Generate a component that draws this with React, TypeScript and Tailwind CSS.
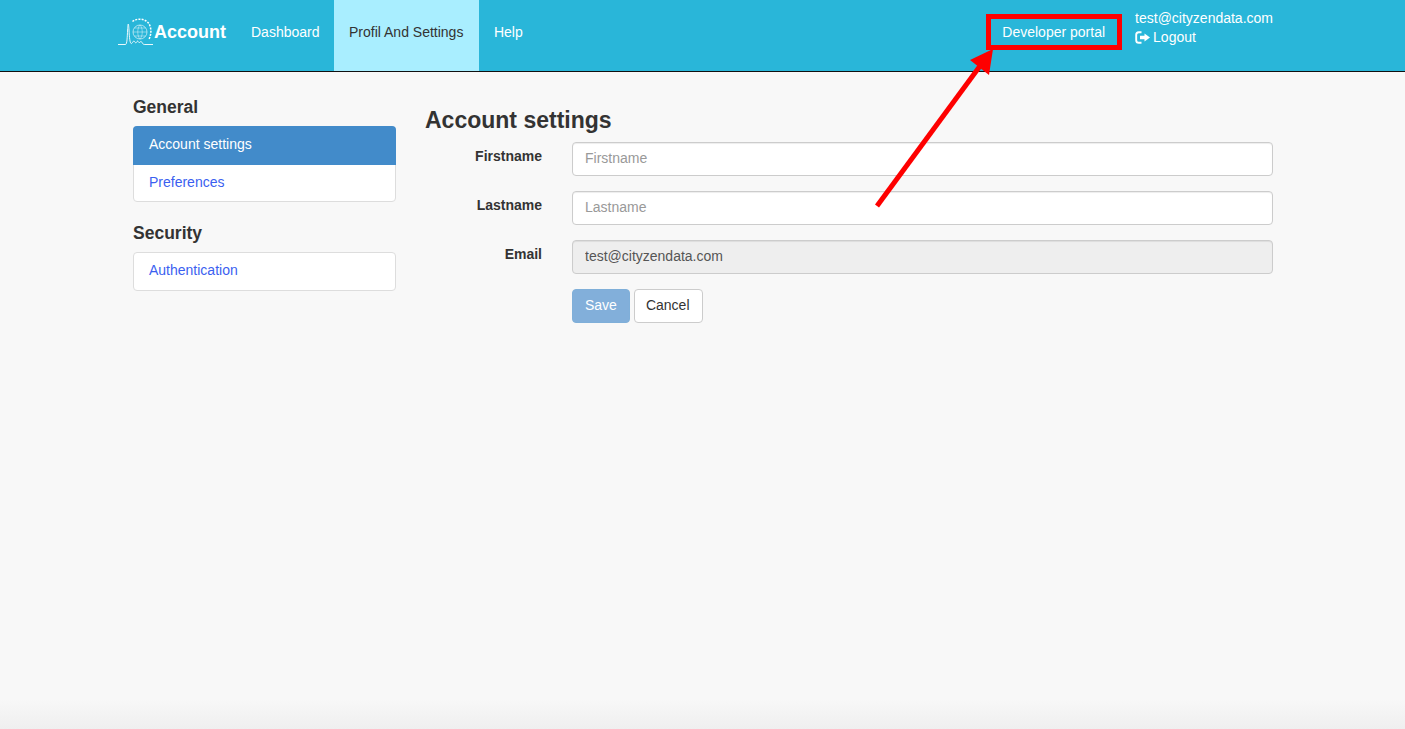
const FONT = "font-['Liberation_Sans',Arial,sans-serif]";

function Logo() {
  return (
    <svg width="36" height="30" viewBox="0 0 36 30" fill="none" stroke="white" className="shrink-0">
      <path d="M0 27.5H7.5C9 27.5 9.3 20 9.6 13C10 5 10.5 5 11 13C11.4 21 12 27 13.5 26.5C14.5 26 15.5 23 16.5 24.5C17.5 26 18 26.5 19 24.5C20 23 20.5 26 21.5 25.5C22.5 25 23 23.5 24 25.5C25 27.5 26 27.5 27 27.5H35" strokeWidth="0.9" />
      <circle cx="22" cy="15" r="7" strokeWidth="0.7" opacity="0.85" />
      <path d="M15 15H29M22 8C19 11 19 19 22 22M22 8C25 11 25 19 22 22M16.5 11H27.5M16.5 19H27.5" strokeWidth="0.5" opacity="0.85" />
      <path d="M14.5 4.5C19 1 26 1.5 30 5.5C33.5 9.5 33.8 17 31 22" strokeWidth="1.5" strokeDasharray="2 1.2" />
    </svg>
  );
}

function LogoutIcon() {
  return (
    <svg width="15" height="13" viewBox="0 0 15 13" fill="none" className="shrink-0">
      <path d="M6.5 1.2H3.8C2.2 1.2 1.2 2.2 1.2 3.8V9.2C1.2 10.8 2.2 11.8 3.8 11.8H6.5" stroke="white" strokeWidth="1.9" />
      <path d="M5 4.8H9.5V2.5L15 6.5L9.5 10.5V8.2H5Z" fill="white" />
    </svg>
  );
}

function Annotation() {
  return (
    <>
      <div className="absolute left-[986px] top-[14px] h-[36px] w-[136px] border-[5px] border-[#fe0000]" />
      <svg width="1405" height="729" className="absolute left-0 top-0 pointer-events-none">
        <line x1="877" y1="206" x2="980" y2="66" stroke="#fe0000" strokeWidth="5" />
        <polygon points="993,49 989,75 970,60" fill="#fe0000" />
      </svg>
    </>
  );
}

function Field({ label, placeholder, value }: { label: string; placeholder?: string; value?: string }) {
  return (
    <div className="flex">
      <label className="w-[117px] pt-1 text-right text-[14px] font-bold leading-5 text-[#333]">{label}</label>
      <input
        className={
          "ml-[30px] h-[34px] w-[701px] rounded border border-[#ccc] px-3 pb-[2px] text-[14px] text-[#555] placeholder:text-[#999] shadow-[inset_0_1px_1px_rgba(0,0,0,0.075)] " +
          (value ? "bg-[#eee]" : "bg-white")
        }
        placeholder={placeholder}
        defaultValue={value}
        disabled={!!value}
      />
    </div>
  );
}

type MenuItem = { label: string; active?: boolean; last?: string };

function MenuGroup({ title, items }: { title: string; items: MenuItem[] }) {
  return (
    <div>
      <h3 className="mb-[9px] pt-px text-[17.5px] font-bold leading-5 text-[#333]">{title}</h3>
      <div className="rounded border border-[#ddd] bg-white">
        {items.map((item) => (
          <div
            key={item.label}
            className={
              "text-[14px] leading-5 " +
              (item.active
                ? "-mx-px -mt-px rounded-t bg-[#428bca] pb-[11px] pl-[16px] pt-[8px] text-white"
                : "px-[15px] pt-[7px] text-[#3b5ff0] " + item.last)
            }
          >
            {item.label}
          </div>
        ))}
      </div>
    </div>
  );
}

export default function App() {
  return (
    <div className={`${FONT} relative flex h-[729px] flex-col overflow-hidden bg-[#f8f8f8]`}>
      <header className="h-[72px] shrink-0 border-b border-[#111] bg-[#29b6d9] text-white">
        <div className="flex h-[71px] pl-[118px] pr-[132px]">
          <div className="flex items-start pt-[17px]">
            <Logo />
            <span className="pt-px text-[18px] font-bold leading-7">Account</span>
          </div>
          <nav className="ml-[10px] flex text-[14px]">
            <a className="flex items-center pb-[6px] pl-[15px] pr-[14px]">Dashboard</a>
            <a className="flex items-center bg-[#a9eeff] px-[15.5px] pb-[6px] text-[#333]">Profil And Settings</a>
            <a className="flex items-center px-[15px] pb-[6px]">Help</a>
          </nav>
          <div className="ml-auto flex items-start">
            <a className="mr-[30px] mt-[22px] text-[14px] leading-5">Developer portal</a>
            <div className="mt-[9px] text-[14px] leading-[19px]">
              <div>test@cityzendata.com</div>
              <div className="flex items-center gap-[3px]">
                <LogoutIcon />
                Logout
              </div>
            </div>
          </div>
        </div>
      </header>

      <main className="flex flex-1 pl-[133px] pt-[24px]">
        <aside className="flex w-[263px] shrink-0 flex-col gap-5">
          <MenuGroup
            title="General"
            items={[{ label: "Account settings", active: true }, { label: "Preferences", last: "pb-[9px]" }]}
          />
          <MenuGroup title="Security" items={[{ label: "Authentication", last: "pb-[10px]" }]} />
        </aside>
        <section className="ml-[29px]">
          <h2 className="mt-[10px] text-[23px] font-bold leading-[28px] text-[#333]">Account settings</h2>
          <div className="mt-[8px] flex flex-col gap-[15px]">
            <Field label="Firstname" placeholder="Firstname" />
            <Field label="Lastname" placeholder="Lastname" />
            <Field label="Email" value="test@cityzendata.com" />
            <div className="ml-[147px] flex gap-1">
              <button className="h-[34px] rounded border border-[#7fafd9] bg-[#82afda] px-3 pb-[2px] text-[14px] text-white">Save</button>
              <button className="h-[34px] rounded border border-[#ccc] bg-white pb-[2px] pl-[11px] pr-3 text-[14px] text-[#333]">Cancel</button>
            </div>
          </div>
        </section>
      </main>

      <footer className="h-[30px] shrink-0 bg-gradient-to-b from-[#f8f8f8] to-[#efefef]" />
      <Annotation />
    </div>
  );
}
